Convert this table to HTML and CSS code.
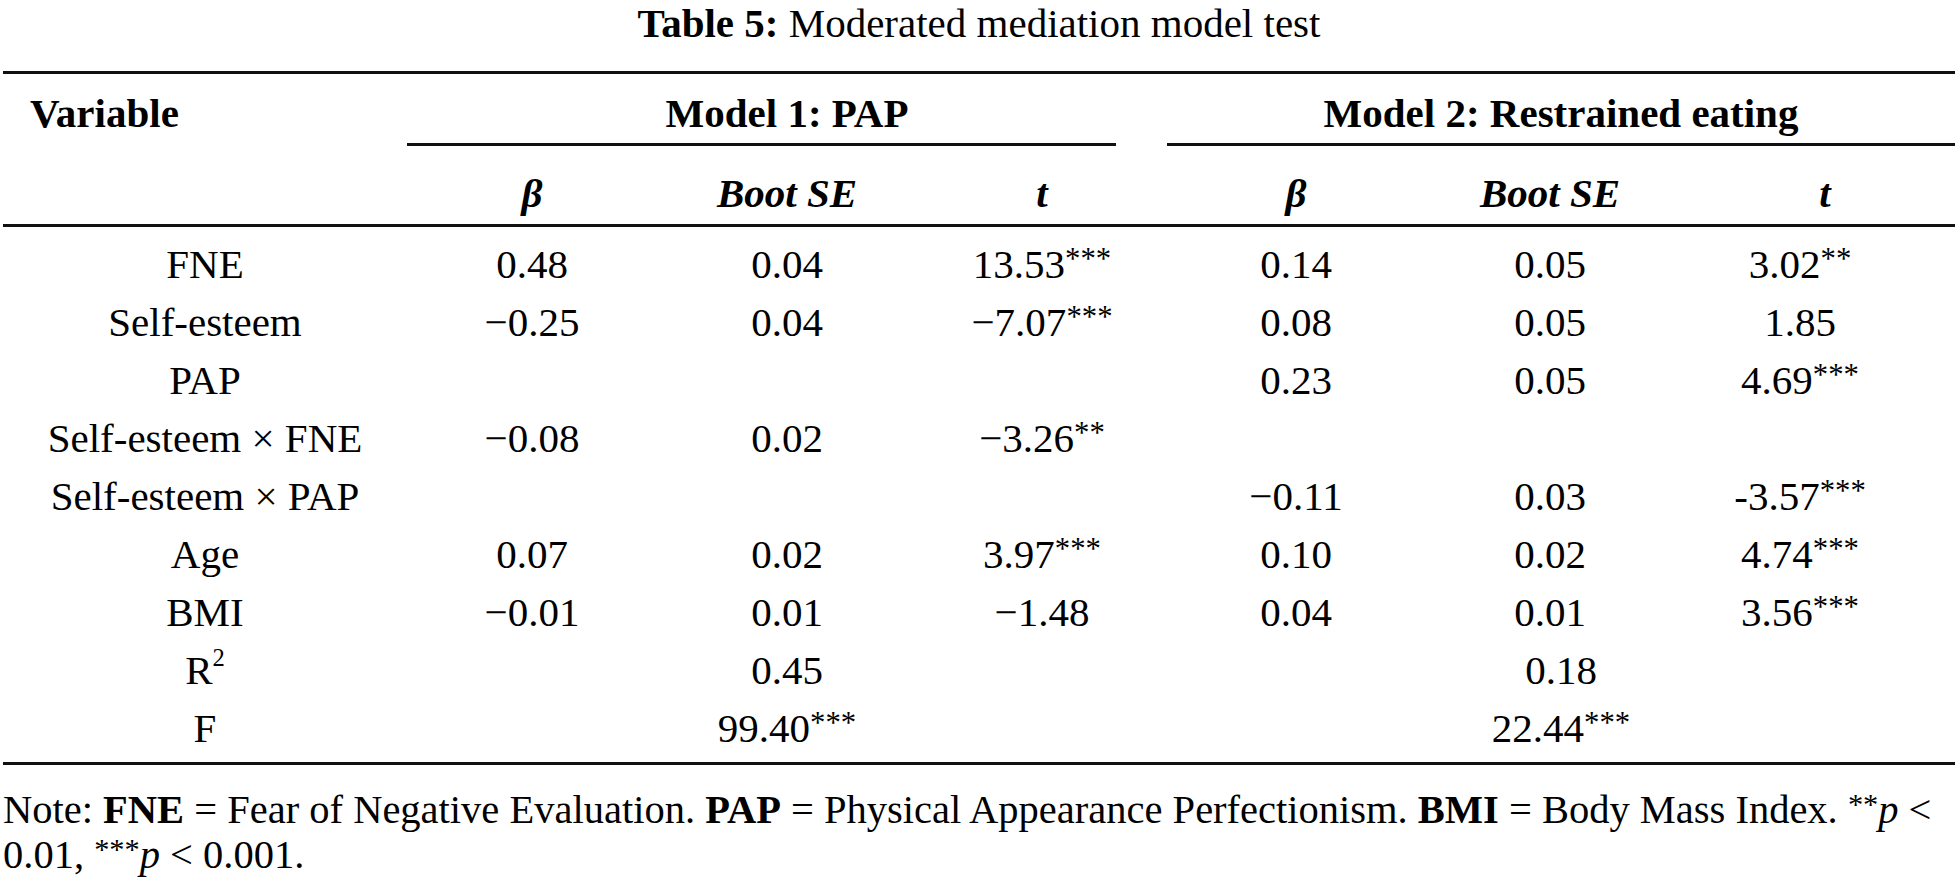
FILE: index.html
```html
<!DOCTYPE html>
<html lang="en">
<head>
<meta charset="utf-8">
<title>Table 5: Moderated mediation model test</title>
<link rel="stylesheet" href="styles.css">
</head>
<body>
<div class="page">
  <div class="caption"><b>Table 5:</b> Moderated mediation model test</div>
  <div class="table">
    <div class="thead">
      <div class="row head1">
        <div class="cell var-head">Variable</div>
        <div class="cell span1">Model 1: PAP</div>
        <div class="cell span2">Model 2: Restrained eating</div>
      </div>
      <div class="row rules">
        <div class="cmid cmid1"></div>
        <div class="cmid cmid2"></div>
      </div>
      <div class="row head2">
        <div class="cell"></div>
        <div class="cell"><i>β</i></div>
        <div class="cell"><i>Boot SE</i></div>
        <div class="cell"><i>t</i></div>
        <div class="cell"><i>β</i></div>
        <div class="cell"><i>Boot SE</i></div>
        <div class="cell last-head"><i>t</i></div>
      </div>
    </div>
    <div class="tbody">
      <div class="row">
        <div class="cell">FNE</div>
        <div class="cell">0.48</div>
        <div class="cell">0.04</div>
        <div class="cell">13.53<span class="sig">***</span></div>
        <div class="cell">0.14</div>
        <div class="cell">0.05</div>
        <div class="cell last">3.02<span class="sig">**</span></div>
      </div>
      <div class="row">
        <div class="cell">Self-esteem</div>
        <div class="cell">−0.25</div>
        <div class="cell">0.04</div>
        <div class="cell">−7.07<span class="sig">***</span></div>
        <div class="cell">0.08</div>
        <div class="cell">0.05</div>
        <div class="cell last">1.85</div>
      </div>
      <div class="row">
        <div class="cell">PAP</div>
        <div class="cell"></div>
        <div class="cell"></div>
        <div class="cell"></div>
        <div class="cell">0.23</div>
        <div class="cell">0.05</div>
        <div class="cell last">4.69<span class="sig">***</span></div>
      </div>
      <div class="row">
        <div class="cell">Self-esteem × FNE</div>
        <div class="cell">−0.08</div>
        <div class="cell">0.02</div>
        <div class="cell">−3.26<span class="sig">**</span></div>
        <div class="cell"></div>
        <div class="cell"></div>
        <div class="cell last"></div>
      </div>
      <div class="row">
        <div class="cell">Self-esteem × PAP</div>
        <div class="cell"></div>
        <div class="cell"></div>
        <div class="cell"></div>
        <div class="cell">−0.11</div>
        <div class="cell">0.03</div>
        <div class="cell last">-3.57<span class="sig">***</span></div>
      </div>
      <div class="row">
        <div class="cell">Age</div>
        <div class="cell">0.07</div>
        <div class="cell">0.02</div>
        <div class="cell">3.97<span class="sig">***</span></div>
        <div class="cell">0.10</div>
        <div class="cell">0.02</div>
        <div class="cell last">4.74<span class="sig">***</span></div>
      </div>
      <div class="row">
        <div class="cell">BMI</div>
        <div class="cell">−0.01</div>
        <div class="cell">0.01</div>
        <div class="cell">−1.48</div>
        <div class="cell">0.04</div>
        <div class="cell">0.01</div>
        <div class="cell last">3.56<span class="sig">***</span></div>
      </div>
      <div class="row">
        <div class="cell">R<sup class="sq">2</sup></div>
        <div class="cell span1">0.45</div>
        <div class="cell span2">0.18</div>
      </div>
      <div class="row">
        <div class="cell">F</div>
        <div class="cell span1">99.40<span class="sig">***</span></div>
        <div class="cell span2">22.44<span class="sig">***</span></div>
      </div>
    </div>
  </div>
  <p class="note">Note: <b>FNE</b> = Fear of Negative Evaluation. <b>PAP</b> = Physical Appearance Perfectionism. <b>BMI</b> = Body Mass Index. <span class="sig">**</span><i>p</i> &lt;<br>0.01, <span class="sig">***</span><i>p</i> &lt; 0.001.</p>
</div>
</body>
</html>
```

FILE: styles.css
```css
html, body {
  margin: 0;
  padding: 0;
  background: #ffffff;
}

body {
  font-family: "Liberation Serif", "Times New Roman", serif;
  font-size: 41px;
  color: #000000;
}

.page {
  width: 1952px;
  margin-left: 3px;
}

.caption {
  text-align: center;
  line-height: 46px;
  margin-bottom: 24.5px;
}

.table {
  border-top: 3px solid #111111;
  border-bottom: 3px solid #111111;
}

.thead {
  border-bottom: 3px solid #111111;
}

.row {
  display: grid;
  grid-template-columns: 404px 250px 260px 250px 258px 250px 280px;
  line-height: 58px;
}

.cell {
  text-align: center;
  white-space: nowrap;
}

.head1 {
  font-weight: bold;
  padding-top: 10px;
  padding-bottom: 1px;
}

.var-head {
  text-align: left;
  padding-left: 27px;
}

.span1 {
  grid-column: 2 / 5;
}

.span2 {
  grid-column: 5 / 8;
}

.rules {
  line-height: 0;
  height: 3px;
}

.cmid {
  height: 3px;
  background: #111111;
}

.cmid1 {
  grid-column: 2 / 5;
  margin-right: 51px;
}

.cmid2 {
  grid-column: 5 / 8;
}

.head2 {
  font-weight: bold;
  padding-top: 18px;
  padding-bottom: 2px;
}

.last-head {
  padding-left: 20px;
}

.last {
  padding-right: 30px;
}

.tbody {
  padding-top: 8.5px;
  padding-bottom: 4.5px;
}

.sig {
  font-size: 0.75em;
  vertical-align: 0.3em;
  line-height: 0;
}

.sq {
  font-size: 0.6em;
  vertical-align: 0.75em;
  line-height: 0;
}

.note {
  margin: 22px 0 0 0;
  font-size: 40.5px;
  line-height: 45px;
}
```
